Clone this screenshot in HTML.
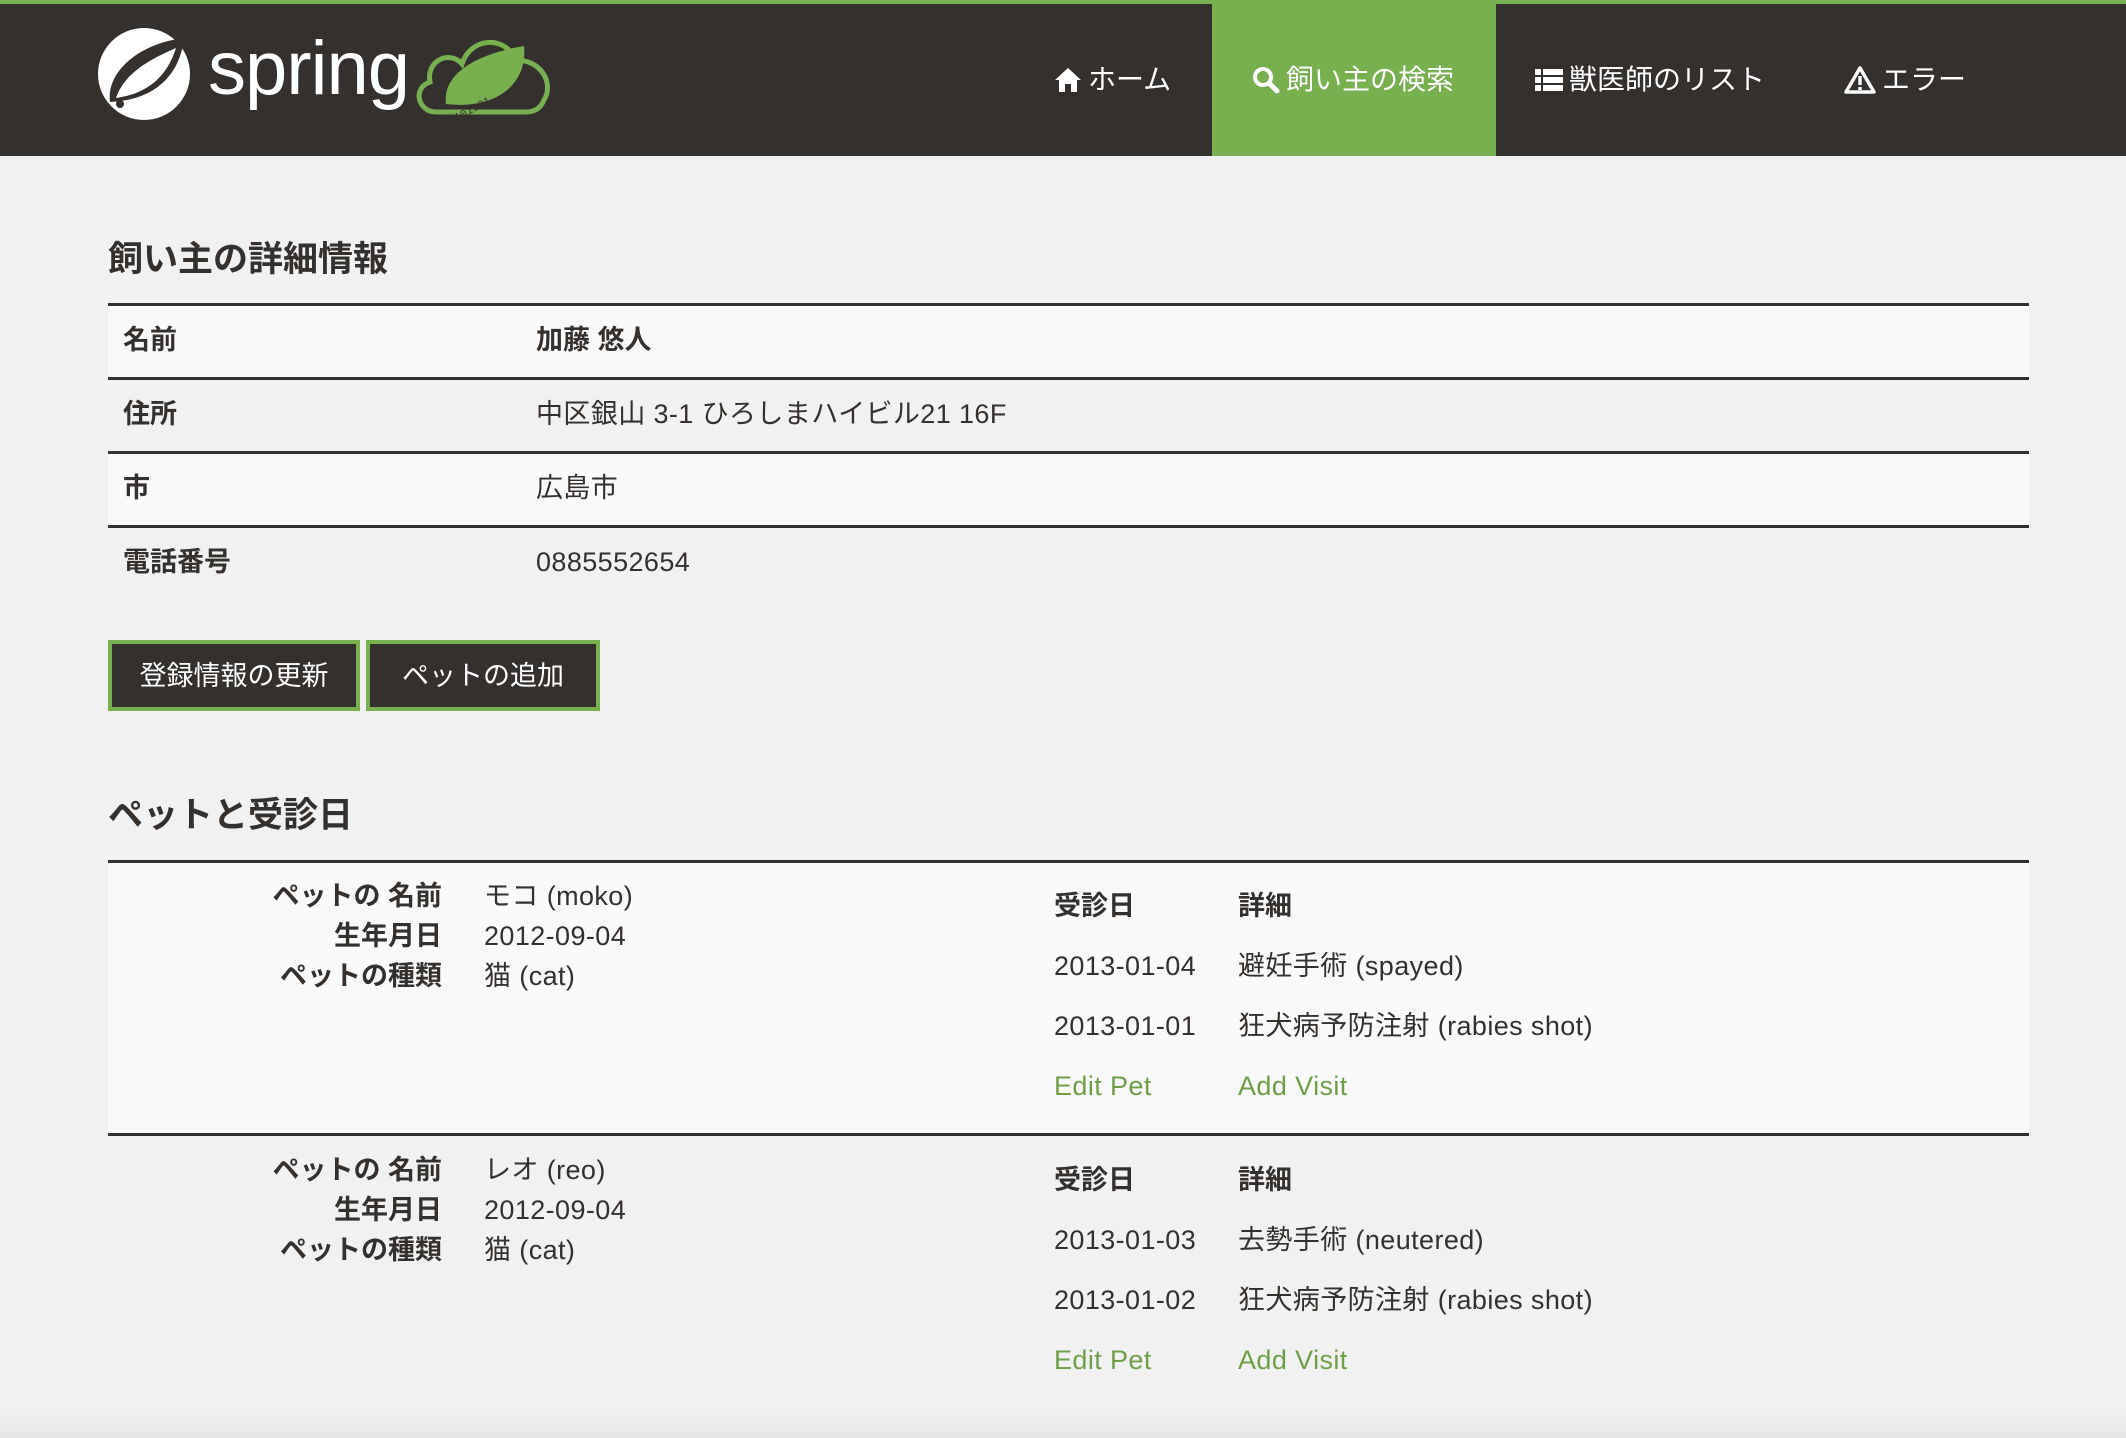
<!DOCTYPE html>
<html><head><meta charset="utf-8">
<style>
*{margin:0;padding:0;box-sizing:border-box}
body{width:2126px;height:1438px;background:#f1f1f1;font-family:"Liberation Sans","Noto Sans CJK JP",sans-serif;color:#34302d;position:relative;overflow:hidden}
.a{position:absolute;white-space:nowrap}
.nav{position:absolute;left:0;top:0;width:2126px;height:156px;background:#34302d;border-top:4px solid #77b04f}
.act{position:absolute;left:1212px;top:0;width:284px;height:156px;background:#77b04f}
.ni{position:absolute;top:63px;font-size:28px;color:#fff;line-height:34px;display:flex;align-items:center;gap:6px}
.h{font-size:35px;font-weight:bold}
.t{font-size:27px;line-height:32px;letter-spacing:0.4px}
.b{font-weight:bold;letter-spacing:0}
.row{position:absolute;left:108px;width:1921px;height:74px}
.line{position:absolute;left:108px;width:1921px;height:3px;background:#34302d}
.btn{position:absolute;top:640px;height:71px;background:#34302d;border:4px solid #77b04f;color:#fff;font-size:27px;display:flex;align-items:center;justify-content:center;padding-bottom:4px}
.g{color:#6f9f45}
.r{text-align:right}
</style></head><body>
<div class="nav"></div>
<div class="act"></div>
<svg class="a" style="left:96px;top:24px" width="460" height="100" viewBox="0 0 460 100">
<circle cx="48" cy="50" r="46" fill="#fff"/>
<path d="M14 78 C10 50 40 20 88 14 C84 50 60 76 14 78Z" fill="#34302d"/>
<path d="M20 74 C28 50 52 36 80 24 C70 56 48 70 20 74Z" fill="#fff"/>
<circle cx="24" cy="80" r="4" fill="#34302d"/>
<text x="112" y="70" font-family="Liberation Sans" font-size="76" fill="#fff" letter-spacing="-1">spring</text>
<path d="M340 88 C322 88 316 64 334 58 C330 36 354 26 366 40 C374 14 408 10 420 36 C446 36 458 60 448 76 C444 86 436 88 430 88Z" fill="none" stroke="#77b04f" stroke-width="5"/>
<path d="M350 80 C346 50 380 30 428 22 C432 60 400 86 350 80Z" fill="#77b04f"/>
<text x="348" y="86" font-family="Liberation Mono" font-size="11" fill="#34302d" transform="rotate(-28 380 80)">0101101</text>
</svg>
<div class="ni" style="left:1054px"><svg width="28" height="26" viewBox="0 0 28 26"><path d="M14 1 L27 13 L23 13 L23 25 L17 25 L17 17 L11 17 L11 25 L5 25 L5 13 L1 13Z" fill="#fff"/></svg>ホーム</div>
<div class="ni" style="left:1252px"><svg width="28" height="28" viewBox="0 0 28 28"><circle cx="11" cy="11" r="8" fill="none" stroke="#fff" stroke-width="4"/><path d="M17 17 L25 25" stroke="#fff" stroke-width="5" stroke-linecap="round"/></svg>飼い主の検索</div>
<div class="ni" style="left:1535px"><svg width="28" height="26" viewBox="0 0 28 26"><g fill="#fff"><rect x="0" y="2" width="6" height="6"/><rect x="8" y="2" width="20" height="6"/><rect x="0" y="10" width="6" height="6"/><rect x="8" y="10" width="20" height="6"/><rect x="0" y="18" width="6" height="6"/><rect x="8" y="18" width="20" height="6"/></g></svg>獣医師のリスト</div>
<div class="ni" style="left:1844px"><svg width="32" height="28" viewBox="0 0 32 28"><path d="M16 2 L30 26 L2 26Z" fill="none" stroke="#fff" stroke-width="3.5" stroke-linejoin="round"/><rect x="14.3" y="10" width="3.4" height="9" fill="#fff"/><rect x="14.3" y="21" width="3.4" height="3" fill="#fff"/></svg>エラー</div>

<div class="a h" style="left:108px;top:231px">飼い主の詳細情報</div>
<div class="row" style="top:304px;background:#f9f9f9"></div>
<div class="row" style="top:452px;background:#f9f9f9"></div>
<div class="line" style="top:303px"></div>
<div class="line" style="top:377px"></div>
<div class="line" style="top:451px"></div>
<div class="line" style="top:525px"></div>
<div class="a t b" style="left:123px;top:324px">名前</div><div class="a t b" style="left:536px;top:324px">加藤 悠人</div>
<div class="a t b" style="left:123px;top:398px">住所</div><div class="a t" style="left:536px;top:398px">中区銀山 3-1 ひろしまハイビル21 16F</div>
<div class="a t b" style="left:123px;top:472px">市</div><div class="a t" style="left:536px;top:472px">広島市</div>
<div class="a t b" style="left:123px;top:546px">電話番号</div><div class="a t" style="left:536px;top:546px">0885552654</div>

<div class="btn" style="left:108px;width:252px">登録情報の更新</div>
<div class="btn" style="left:366px;width:234px">ペットの追加</div>

<div class="a h" style="left:108px;top:787px">ペットと受診日</div>
<div class="row" style="top:862px;height:273px;background:#f9f9f9"></div>
<div class="line" style="top:860px"></div>
<div class="line" style="top:1133px"></div>

<div class="a t b r" style="left:200px;width:242px;top:880px">ペットの 名前</div><div class="a t" style="left:484px;top:880px">モコ (moko)</div>
<div class="a t b r" style="left:200px;width:242px;top:920px">生年月日</div><div class="a t" style="left:484px;top:920px">2012-09-04</div>
<div class="a t b r" style="left:200px;width:242px;top:960px">ペットの種類</div><div class="a t" style="left:484px;top:960px">猫 (cat)</div>
<div class="a t b" style="left:1054px;top:890px">受診日</div><div class="a t b" style="left:1238px;top:890px">詳細</div>
<div class="a t" style="left:1054px;top:950px">2013-01-04</div><div class="a t" style="left:1238px;top:950px">避妊手術 (spayed)</div>
<div class="a t" style="left:1054px;top:1010px">2013-01-01</div><div class="a t" style="left:1238px;top:1010px">狂犬病予防注射 (rabies shot)</div>
<div class="a t g" style="left:1054px;top:1070px">Edit Pet</div><div class="a t g" style="left:1238px;top:1070px">Add Visit</div>

<div class="a t b r" style="left:200px;width:242px;top:1154px">ペットの 名前</div><div class="a t" style="left:484px;top:1154px">レオ (reo)</div>
<div class="a t b r" style="left:200px;width:242px;top:1194px">生年月日</div><div class="a t" style="left:484px;top:1194px">2012-09-04</div>
<div class="a t b r" style="left:200px;width:242px;top:1234px">ペットの種類</div><div class="a t" style="left:484px;top:1234px">猫 (cat)</div>
<div class="a t b" style="left:1054px;top:1164px">受診日</div><div class="a t b" style="left:1238px;top:1164px">詳細</div>
<div class="a t" style="left:1054px;top:1224px">2013-01-03</div><div class="a t" style="left:1238px;top:1224px">去勢手術 (neutered)</div>
<div class="a t" style="left:1054px;top:1284px">2013-01-02</div><div class="a t" style="left:1238px;top:1284px">狂犬病予防注射 (rabies shot)</div>
<div class="a t g" style="left:1054px;top:1344px">Edit Pet</div><div class="a t g" style="left:1238px;top:1344px">Add Visit</div>

<div class="a" style="left:0;top:1410px;width:2126px;height:28px;background:linear-gradient(#f1f1f1,#e6e6e6)"></div>
</body></html>
